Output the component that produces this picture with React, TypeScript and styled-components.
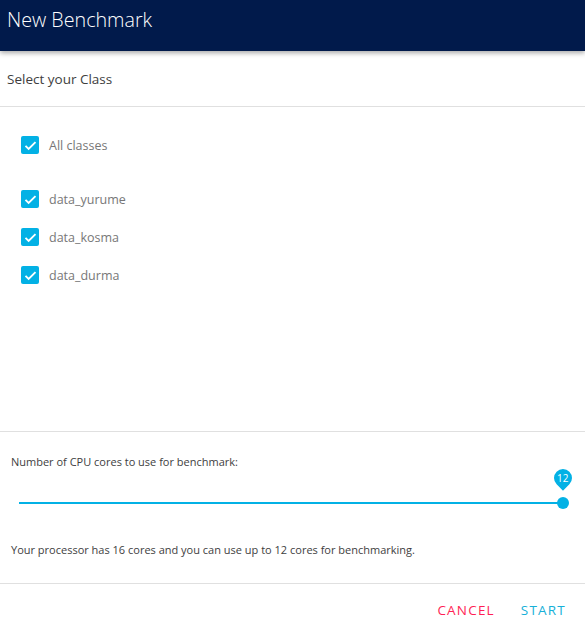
import React from "react";
import styled, { createGlobalStyle } from "styled-components";

const Global = createGlobalStyle`
  html, body { margin: 0; padding: 0; background: #fff; }
  body { font-family: "Open Sans", "Noto Sans", sans-serif; }
  * { box-sizing: border-box; }
`;

const Page = styled.div`
  width: 585px;
  height: 629px;
  display: flex;
  flex-direction: column;
  overflow: hidden;
`;

const Header = styled.header`
  height: 51px;
  flex: none;
  background: #011a4b;
  color: #fff;
  font-size: 19.7px;
  font-weight: 300;
  padding: 6px 0 0 7px;
  box-shadow: 0 2px 5px rgba(0, 0, 0, 0.35);
  position: relative;
  z-index: 1;
`;

const SectionTitle = styled.div`
  height: 56px;
  flex: none;
  display: flex;
  align-items: center;
  padding: 1px 0 0 7px;
  font-size: 13.5px;
  color: #3e3e3e;
  border-bottom: 1px solid #e0e0e0;
`;

const List = styled.div`
  height: 325px;
  flex: none;
  display: flex;
  flex-direction: column;
  padding: 29px 0 0 21px;
  border-bottom: 1px solid #e0e0e0;
`;

const Row = styled.label<{ $gap?: number }>`
  display: flex;
  align-items: center;
  gap: 10px;
  height: 18px;
  margin-bottom: ${(p) => p.$gap ?? 20}px;
  font-size: 12.5px;
  color: #777;
`;

const Box = styled.span`
  width: 18px;
  height: 18px;
  border-radius: 2px;
  background: #03b1e5;
  display: flex;
  align-items: center;
  justify-content: center;
`;

const SliderSection = styled.div`
  height: 152px;
  flex: none;
  display: flex;
  flex-direction: column;
  padding: 22px 11px 0 11px;
  border-bottom: 1px solid #e0e0e0;
`;

const SmallText = styled.div`
  font-size: 11px;
  color: #3e3e3e;
`;

const SliderWrap = styled.div`
  position: relative;
  height: 73px;
  margin: 0 -5px 0 8px;
`;

const Track = styled.div`
  position: absolute;
  left: 0;
  right: 16px;
  top: 33px;
  height: 2px;
  background: #03b1e5;
`;

const Thumb = styled.div`
  position: absolute;
  right: 10px;
  top: 28px;
  width: 12px;
  height: 12px;
  border-radius: 50%;
  background: #03b1e5;
`;

const Bubble = styled.div`
  position: absolute;
  right: 7px;
  top: 0px;
  width: 18px;
  height: 18px;
  border-radius: 50% 50% 0 50%;
  transform: rotate(45deg);
  background: #03b1e5;
  display: flex;
  align-items: center;
  justify-content: center;
`;

const BubbleText = styled.span`
  transform: rotate(-45deg);
  color: #fff;
  font-size: 10px;
  line-height: 1;
`;

const Footer = styled.div`
  flex: 1;
  display: flex;
  justify-content: flex-end;
  align-items: center;
  gap: 26px;
  padding: 6px 19px 0 0;
`;

const Button = styled.button<{ $color: string }>`
  border: none;
  background: none;
  padding: 0;
  font-family: inherit;
  font-size: 13.5px;
  letter-spacing: 1.2px;
  color: ${(p) => p.$color};
  cursor: pointer;
`;

const Check = () => (
  <Box>
    <svg width="15" height="15" viewBox="0 0 24 24">
      <path d="M4 12.5l5 5L20 6.5" fill="none" stroke="#fff" strokeWidth="3" />
    </svg>
  </Box>
);

export default function App() {
  const items = ["data_yurume", "data_kosma", "data_durma"];
  return (
    <Page>
      <Global />
      <Header>New Benchmark</Header>
      <SectionTitle>Select your Class</SectionTitle>
      <List>
        <Row $gap={36}>
          <Check />
          All classes
        </Row>
        {items.map((it) => (
          <Row key={it} $gap={20}>
            <Check />
            {it}
          </Row>
        ))}
      </List>
      <SliderSection>
        <SmallText>Number of CPU cores to use for benchmark:</SmallText>
        <SliderWrap>
          <Track />
          <Thumb />
          <Bubble>
            <BubbleText>12</BubbleText>
          </Bubble>
        </SliderWrap>
        <SmallText>Your processor has 16 cores and you can use up to 12 cores for benchmarking.</SmallText>
      </SliderSection>
      <Footer>
        <Button $color="#ff1f55">CANCEL</Button>
        <Button $color="#17b0d8">START</Button>
      </Footer>
    </Page>
  );
}
